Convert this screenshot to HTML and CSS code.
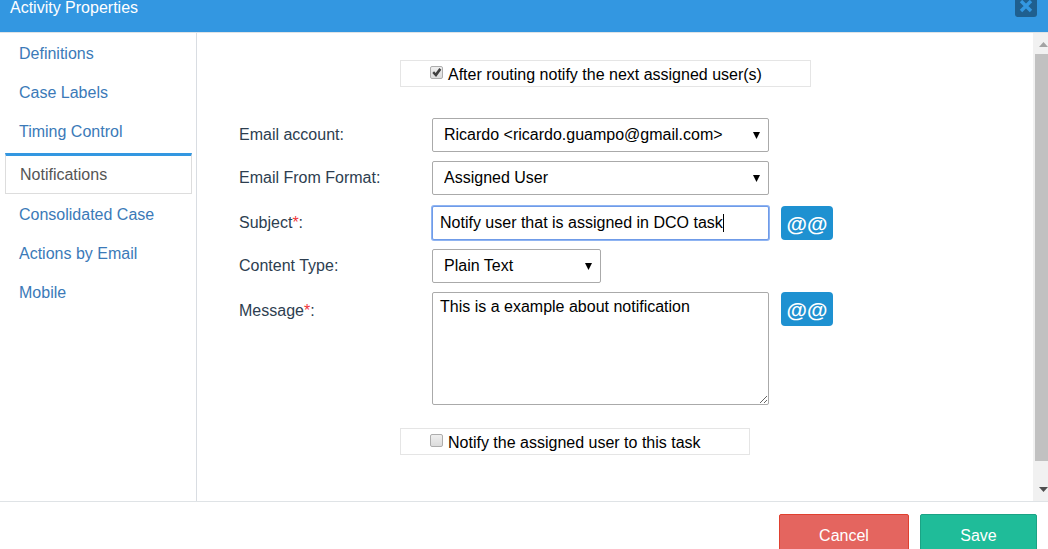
FILE: index.html
```html
<!DOCTYPE html>
<html lang="en">
<head>
<meta charset="utf-8">
<title>Activity Properties</title>
<link rel="stylesheet" href="styles.css">
</head>
<body>
<div class="dialog">
  <header class="header">
    <h1 class="title">Activity Properties</h1>
    <button class="close" type="button" aria-label="Close">
      <svg width="14" height="14" viewBox="0 0 14 14" aria-hidden="true"><path d="M2 2L12 12M12 2L2 12" fill="none" stroke="currentColor" stroke-width="3.4"/></svg>
    </button>
  </header>
  <div class="body">
    <nav class="tabs">
      <a class="tab" href="#">Definitions</a>
      <a class="tab" href="#">Case Labels</a>
      <a class="tab" href="#">Timing Control</a>
      <a class="tab tab-active" href="#" aria-current="page">Notifications</a>
      <a class="tab" href="#">Consolidated Case</a>
      <a class="tab" href="#">Actions by Email</a>
      <a class="tab" href="#">Mobile</a>
    </nav>
    <form class="form" id="notify">
      <div class="toggle toggle-wide">
        <input class="check" type="checkbox" id="after" checked>
        <label for="after">After routing notify the next assigned user(s)</label>
      </div>
      <div class="rows">
        <div class="row">
          <label class="label" for="account">Email account:</label>
          <div class="pick"><select class="field" id="account"><option>Ricardo &lt;ricardo.guampo@gmail.com&gt;</option></select></div>
        </div>
        <div class="row">
          <label class="label" for="format">Email From Format:</label>
          <div class="pick"><select class="field" id="format"><option>Assigned User</option></select></div>
        </div>
        <div class="row row-subject">
          <label class="label" for="subject">Subject<span class="required">*</span>:</label>
          <div class="text"><input class="field field-focus" id="subject" type="text" value="Notify user that is assigned in DCO task"><span class="caret"></span></div>
          <button class="variable" type="button">@@</button>
        </div>
        <div class="row">
          <label class="label" for="type">Content Type:</label>
          <div class="pick pick-small"><select class="field" id="type"><option>Plain Text</option></select></div>
        </div>
        <div class="row">
          <label class="label label-message" for="message">Message<span class="required">*</span>:</label>
          <textarea class="field message" id="message">This is a example about notification</textarea>
          <button class="variable" type="button">@@</button>
        </div>
      </div>
      <div class="toggle">
        <input class="check" type="checkbox" id="assigned">
        <label for="assigned">Notify the assigned user to this task</label>
      </div>
    </form>
    <div class="scrollbar" aria-hidden="true">
      <span class="arrow arrow-up"></span>
      <span class="thumb"></span>
      <span class="arrow arrow-down"></span>
    </div>
  </div>
  <footer class="footer">
    <button class="button cancel" type="button">Cancel</button>
    <button class="button save" type="submit" form="notify">Save</button>
  </footer>
</div>
</body>
</html>
```
FILE: styles.css
```css
* { box-sizing: border-box; }

body {
  margin: 0;
  overflow: hidden;
  background: #fff;
  color: #000;
  font: 16px/20px "Liberation Sans", Arial, sans-serif;
}

button, input, select, textarea { font: inherit; }

.dialog {
  display: flex;
  flex-direction: column;
  height: 100vh;
}

.header {
  display: flex;
  justify-content: space-between;
  align-items: flex-start;
  flex: none;
  padding: 0 11px 16px 10px;
  background: #3397e1;
}

.title {
  margin: 0;
  color: #fff;
  font-size: 16px;
  font-weight: 400;
  line-height: 16px;
}

.close {
  display: flex;
  justify-content: center;
  width: 22px;
  height: 17px;
  margin-bottom: -1px;
  padding: 0;
  border: 0;
  border-radius: 0 0 3px 3px;
  background: #1f5f8f;
  color: #3397e1;
}

.close svg { margin-top: -1px; }

.body {
  display: flex;
  flex: 1;
  min-height: 0;
  border-top: 1px solid #dfe3e6;
  border-bottom: 1px solid #dfe3e6;
}

.tabs {
  flex: none;
  width: 197px;
  padding: 1px 4px 0 5px;
  border-right: 1px solid #d9dde2;
}

.tab {
  display: block;
  padding: 10px 14px 9px;
  color: #3b7ab8;
  text-decoration: none;
}

.tab-active {
  margin: 2px 0 1px;
  padding: 9px 14px 8px;
  border: 1px solid #ddd;
  border-top: 3px solid #3397e1;
  color: #555;
}

.form {
  flex: 1;
  min-width: 0;
  padding: 27px 42px 0;
}

.toggle {
  display: flex;
  align-items: flex-start;
  gap: 5px;
  width: 350px;
  height: 27px;
  margin-left: 161px;
  padding: 4px 29px 0;
  border: 1px solid #e5e5e5;
}

.toggle-wide { width: 411px; }

.check {
  appearance: none;
  display: flex;
  flex: none;
  width: 13px;
  height: 13px;
  margin: 1px 0 0;
  border: 1px solid #adadad;
  border-radius: 2px;
  background: linear-gradient(#efefef, #dcdcdc);
}

.check:checked::before {
  content: "";
  width: 11px;
  height: 11px;
  background: #404040;
  clip-path: polygon(12% 54%, 28% 38%, 42% 54%, 76% 10%, 94% 24%, 46% 90%);
}

.rows {
  display: flex;
  flex-direction: column;
  gap: 9px;
  margin: 31px 0 23px;
}

.row {
  display: flex;
  align-items: flex-start;
}

.row-subject { margin-top: 2px; }

.label {
  flex: none;
  width: 193px;
  color: #2d3e50;
  line-height: 34px;
}

.label-message { line-height: 38px; }

.required { color: #f0353a; }

.pick, .text {
  position: relative;
  flex: none;
  width: 337px;
}

.pick-small { width: 169px; }

.pick::after {
  content: "";
  position: absolute;
  top: 14px;
  right: 9px;
  width: 7px;
  height: 7px;
  background: #000;
  clip-path: polygon(0 0, 100% 0, 50% 100%);
  pointer-events: none;
}

.field {
  appearance: none;
  display: block;
  width: 100%;
  height: 34px;
  margin: 0;
  padding: 0 7px;
  border: 1px solid #aaa;
  border-radius: 2px;
  outline: 0;
  background: #fff;
  color: #000;
}

.pick .field { padding: 0 24px 0 11px; }

.field-focus {
  border-color: #6f9be8;
  box-shadow: 0 0 0 1px #8fb4f2;
}

.caret {
  position: absolute;
  top: 8px;
  left: 291px;
  width: 1px;
  height: 18px;
  background: #000;
}

.message {
  flex: none;
  width: 337px;
  height: 113px;
  padding: 4px 7px;
  resize: both;
}

.variable {
  flex: none;
  width: 52px;
  height: 34px;
  margin-left: 12px;
  padding: 1px 0 0;
  border: 0;
  border-radius: 4px;
  background: #1e91d1;
  color: #fff;
  font-size: 21px;
  font-weight: 700;
}

.scrollbar {
  display: flex;
  flex-direction: column;
  flex: none;
  width: 15px;
  padding: 9px 0 9px 2px;
  background: #f1f1f1;
}

.arrow {
  flex: none;
  width: 9px;
  height: 5px;
  margin-left: 4px;
}

.arrow-up {
  background: #a3a3a3;
  clip-path: polygon(50% 0, 100% 100%, 0 100%);
}

.arrow-down {
  background: #505050;
  clip-path: polygon(0 0, 100% 0, 50% 100%);
}

.thumb {
  flex: 1;
  margin: 7px 0 26px;
  background: #c1c1c1;
}

.footer {
  display: flex;
  justify-content: flex-end;
  flex: none;
  gap: 11px;
  height: 47px;
  padding: 12px 11px 0 0;
}

.button {
  width: 130px;
  height: 42px;
  padding: 2px 0 0;
  border: 1px solid #e0402f;
  border-radius: 2px;
  background: #e4655f;
  color: #fff;
}

.save {
  width: 117px;
  border-color: #1ba385;
  background: #1fbc99;
}
```
